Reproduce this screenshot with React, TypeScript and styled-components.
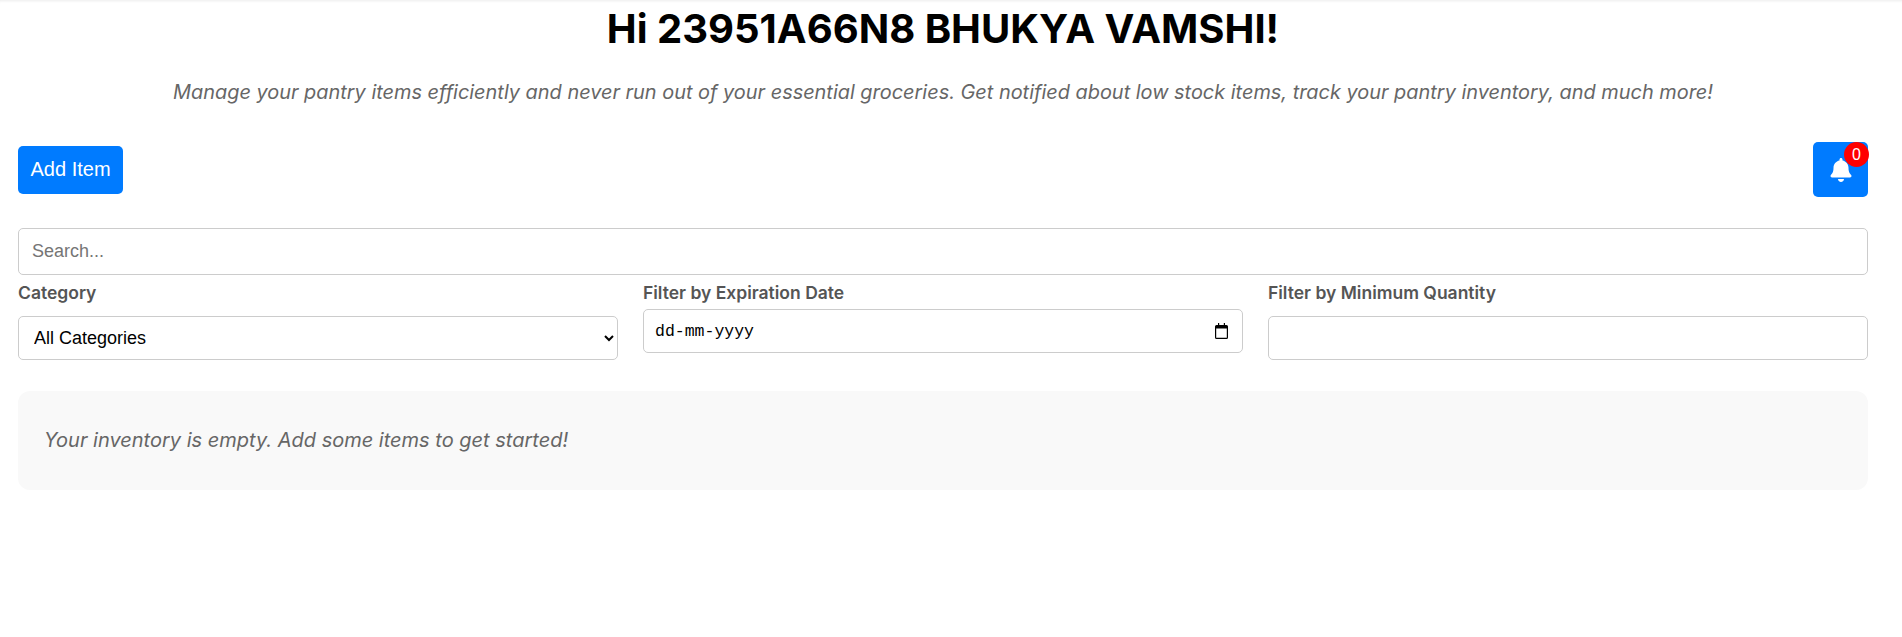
import styled, { createGlobalStyle } from "styled-components";
import { FaBell } from "react-icons/fa";

const GlobalStyle = createGlobalStyle`
  * { box-sizing: border-box; }
  html, body { margin: 0; padding: 0; background: #fff; }
  body { font-family: Inter, "Liberation Sans", sans-serif; }
`;

const Page = styled.div`
  padding: 0 34px 0 18px;
  min-height: 637px;
  box-shadow: inset 0 3px 3px -2px rgba(0, 0, 0, 0.08);
`;

const Title = styled.h1`
  margin: 0;
  padding-top: 5px;
  font-size: 40px;
  line-height: 48px;
  font-weight: 700;
  color: #000;
  text-align: center;
`;

const Tagline = styled.p`
  margin: 27px 0 0;
  font-size: 19.92px;
  line-height: 24px;
  font-style: italic;
  color: #666;
  text-align: center;
`;

const Toolbar = styled.div`
  display: flex;
  justify-content: space-between;
  align-items: center;
  margin-top: 38px;
`;

const AddButton = styled.button`
  height: 48px;
  padding: 0 12.5px;
  border: none;
  border-radius: 5px;
  background: #007bff;
  color: #fff;
  font-family: "Liberation Sans", sans-serif;
  font-size: 20px;
`;

const BellButton = styled.button`
  position: relative;
  width: 55px;
  height: 55px;
  display: flex;
  align-items: center;
  justify-content: center;
  border: none;
  border-radius: 5px;
  background: #007bff;
  color: #fff;
  font-size: 24px;
`;

const Badge = styled.span`
  position: absolute;
  top: 0;
  right: -1px;
  width: 25px;
  height: 25px;
  border-radius: 50%;
  background: #f00;
  color: #fff;
  font-family: "Liberation Sans", sans-serif;
  font-size: 16px;
  line-height: 25px;
  text-align: center;
`;

const SearchInput = styled.input`
  display: block;
  width: 100%;
  height: 47px;
  margin-top: 31px;
  padding: 0 13px;
  border: 1px solid #ccc;
  border-radius: 5px;
  font-family: "Liberation Sans", sans-serif;
  font-size: 18px;
  &::placeholder { color: #757575; }
`;

const Filters = styled.div`
  display: grid;
  grid-template-columns: repeat(3, 1fr);
  gap: 25px;
  margin-top: 7px;
`;

const Field = styled.div`
  display: flex;
  flex-direction: column;
`;

const FieldLabel = styled.label<{ $gap: number }>`
  font-size: 17.5px;
  line-height: 21px;
  font-weight: 600;
  color: #555;
  margin-bottom: ${(p) => p.$gap}px;
`;

const controlStyles = `
  width: 100%;
  height: 44px;
  border: 1px solid #ccc;
  border-radius: 5px;
  background: #fff;
  color: #000;
`;

const SelectBox = styled.select`
  ${controlStyles}
  padding: 0 11px;
  font-family: "Liberation Sans", sans-serif;
  font-size: 18px;
`;

const DateBox = styled.div`
  ${controlStyles}
  display: flex;
  align-items: center;
  padding: 0 14px 0 11px;
`;

const DateText = styled.input`
  flex: 1;
  min-width: 0;
  padding: 0;
  border: none;
  outline: none;
  background: transparent;
  font-family: "Liberation Mono", monospace;
  font-size: 16.5px;
  &::placeholder { color: #000; opacity: 1; }
`;

const NumberBox = styled.input`
  ${controlStyles}
`;

const EmptyCard = styled.div`
  margin-top: 31px;
  padding: 32px 26px;
  height: 99px;
  background: #f9f9f9;
  border-radius: 12px;
  font-size: 20px;
  line-height: 35px;
  font-style: italic;
  color: #666;
`;

const CalendarIcon = () => (
  <svg width="13" height="16" viewBox="0 0 13 16" aria-hidden="true">
    <path
      d="M3 0h1.200v2h4.600V0H10v2h1.500A1.500 1.500 0 0 1 13 3.500v11a1.500 1.500 0 0 1-1.500 1.500h-10A1.500 1.500 0 0 1 0 14.500v-11A1.500 1.500 0 0 1 1.500 2H3V0zM1.200 5.500v9c0 .2.100.3.300.3h10c.2 0 .3-.1.300-.3v-9H1.200z"
      fill="#000"
    />
  </svg>
);

export default function App() {
  return (
    <Page>
      <GlobalStyle />
      <Title>Hi 23951A66N8 BHUKYA VAMSHI!</Title>
      <Tagline>
        Manage your pantry items efficiently and never run out of your essential groceries. Get notified about low stock items, track your pantry inventory, and much more!
      </Tagline>
      <Toolbar>
        <AddButton>Add Item</AddButton>
        <BellButton aria-label="Notifications">
          <FaBell />
          <Badge>0</Badge>
        </BellButton>
      </Toolbar>
      <SearchInput placeholder="Search..." />
      <Filters>
        <Field>
          <FieldLabel $gap={13}>Category</FieldLabel>
          <SelectBox>
            <option>All Categories</option>
          </SelectBox>
        </Field>
        <Field>
          <FieldLabel $gap={6}>Filter by Expiration Date</FieldLabel>
          <DateBox>
            <DateText placeholder="dd-mm-yyyy" />
            <CalendarIcon />
          </DateBox>
        </Field>
        <Field>
          <FieldLabel $gap={13}>Filter by Minimum Quantity</FieldLabel>
          <NumberBox type="number" />
        </Field>
      </Filters>
      <EmptyCard>Your inventory is empty. Add some items to get started!</EmptyCard>
    </Page>
  );
}
